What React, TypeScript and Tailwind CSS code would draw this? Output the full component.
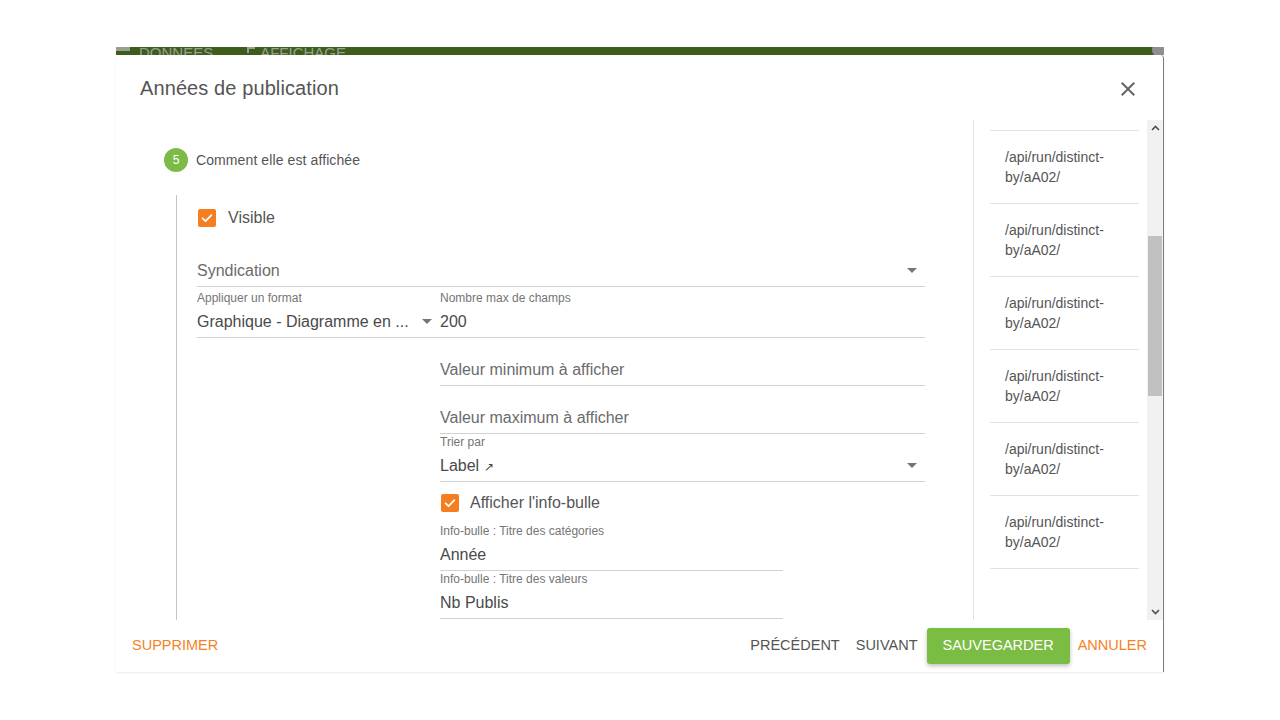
import React from "react";

const ORANGE = "#f6821f";
const GREEN = "#7bbc43";

function Check({ className = "" }: { className?: string }) {
  return (
    <span
      className={`flex h-[18px] w-[18px] items-center justify-center rounded-[2px] bg-[#f57f20] ${className}`}
    >
      <svg width="14" height="14" viewBox="0 0 24 24">
        <path
          d="M4.5 12.5l5 5 10-10.5"
          fill="none"
          stroke="#fff"
          strokeWidth="3"
          strokeLinecap="round"
          strokeLinejoin="round"
        />
      </svg>
    </span>
  );
}

function Caret() {
  return (
    <svg width="10" height="5" viewBox="0 0 10 5" className="shrink-0">
      <polygon points="0,0 10,0 5,5" fill="#757575" />
    </svg>
  );
}

function Field({
  label,
  value,
  placeholder,
  select,
  className = "",
}: {
  label?: string;
  value?: React.ReactNode;
  placeholder?: string;
  select?: boolean;
  className?: string;
}) {
  return (
    <div className={`flex h-[48px] flex-col justify-end border-b border-[#d2d2d2] ${className}`}>
      {label && (
        <div className="h-[16px] text-[12px] leading-[16px] text-[#757575]">{label}</div>
      )}
      <div className="flex h-[31px] items-center pr-[8px] text-[16px]">
        <span
          className={`flex-1 truncate ${value ? "text-[#4a4a4a]" : "text-[#6b6b6b]"}`}
        >
          {value ?? placeholder}
        </span>
        {select && <Caret />}
      </div>
    </div>
  );
}

function ApiItem() {
  return (
    <div className="border-b border-[#e3e3e3] py-[16px] pl-[15px] text-[14px] leading-[20px] text-[#555]">
      /api/run/distinct-
      <br />
      by/aA02/
    </div>
  );
}

export default function App() {
  return (
    <div className="min-h-screen bg-white pt-[47px] font-['Liberation_Sans',Arial,sans-serif]">
      {/* page behind the dialog */}
      <div className="relative ml-[116px] h-[8px] w-[1048px] overflow-hidden bg-[#3d5d1c]">
        <div className="-mt-[2px] flex items-start text-[15px] uppercase leading-[15px] text-[#9aa08f]">
          <span className="mt-[2px] h-[4px] w-[14px] bg-[#9aa08f]" />
          <span className="ml-[9px]">Données</span>
          <span className="ml-[34px] mt-[2px] h-[6px] w-[8px] border-l-2 border-t-2 border-[#9aa08f]" />
          <span className="ml-[5px]">Affichage</span>
        </div>
        <span className="absolute -top-[4px] right-[-2px] h-[14px] w-[14px] rounded-full bg-[#8f8f8f]" />
      </div>

      <div className="ml-[116px] flex h-[617px] w-[1048px] flex-col rounded-tr-[4px] border-r border-[#7c7c7c] bg-white shadow-[0_1px_2px_rgba(0,0,0,0.08)]">
        {/* header */}
        <div className="flex h-[65px] shrink-0 items-center justify-between pl-[24px] pr-[23px]">
          <h2 className="pt-[1px] text-[20px] tracking-[0.1px] text-[#555]">Années de publication</h2>
          <svg width="24" height="24" viewBox="0 0 24 24" className="mt-[3px]">
            <path
              d="M19 6.41L17.59 5 12 10.59 6.41 5 5 6.41 10.59 12 5 17.59 6.41 19 12 13.41 17.59 19 19 17.59 13.41 12z"
              fill="#666"
            />
          </svg>
        </div>

        {/* body */}
        <div className="flex h-[500px] shrink-0 overflow-hidden">
          <div className="w-[857px] shrink-0 pt-[28px]">
            <div className="flex h-[24px] items-center pl-[48px]">
              <span className="flex h-[24px] w-[24px] items-center justify-center rounded-full bg-[#7cbb45] text-[12px] text-white">
                5
              </span>
              <span className="ml-[8px] text-[14px] tracking-[0.1px] text-[#555]">
                Comment elle est affichée
              </span>
            </div>

            <div className="ml-[60px] mt-[23px] h-[500px] border-l border-[#c4c4c4] pl-[20px] pt-[1px]">
              <div className="flex h-[43px] w-[728px] items-center">
                <Check className="ml-[1px]" />
                <span className="ml-[12px] text-[16px] text-[#555]">Visible</span>
              </div>

              <Field className="w-[728px]" placeholder="Syndication" select />

              <div className="mt-[3px] flex w-[728px]">
                <Field
                  className="w-[243px]"
                  label="Appliquer un format"
                  value="Graphique - Diagramme en ..."
                  select
                />
                <Field className="w-[485px]" label="Nombre max de champs" value="200" />
              </div>

              <div className="ml-[243px] w-[485px]">
                <Field placeholder="Valeur minimum à afficher" />
                <Field placeholder="Valeur maximum à afficher" />
                <Field
                  label="Trier par"
                  value={
                    <>
                      Label <span className="text-[12px]">↗</span>
                    </>
                  }
                  select
                />
                <div className="flex h-[41px] items-center">
                  <Check className="ml-[1px]" />
                  <span className="ml-[11px] text-[16px] text-[#555]">Afficher l'info-bulle</span>
                </div>
                <Field
                  className="w-[343px]"
                  label="Info-bulle : Titre des catégories"
                  value="Année"
                />
                <Field
                  className="w-[343px]"
                  label="Info-bulle : Titre des valeurs"
                  value="Nb Publis"
                />
              </div>
            </div>
          </div>

          {/* right panel */}
          <div className="w-[174px] shrink-0 border-l border-[#e0e0e0] pl-[16px] pr-[8px] pt-[10px]">
            <div className="border-t border-[#e3e3e3]">
              {Array.from({ length: 6 }).map((_, i) => (
                <ApiItem key={i} />
              ))}
            </div>
          </div>

          {/* scrollbar */}
          <div className="flex w-[16px] shrink-0 flex-col bg-[#f1f1f1]">
            <div className="flex h-[16px] items-center justify-center">
              <svg width="9" height="6" viewBox="0 0 9 6">
                <path d="M1 5l3.5-3.5L8 5" fill="none" stroke="#505050" strokeWidth="1.6" />
              </svg>
            </div>
            <div className="mx-[1px] mt-[100px] h-[160px] bg-[#c1c1c1]" />
            <div className="flex-1" />
            <div className="flex h-[16px] items-center justify-center">
              <svg width="9" height="6" viewBox="0 0 9 6">
                <path d="M1 1l3.5 3.5L8 1" fill="none" stroke="#505050" strokeWidth="1.6" />
              </svg>
            </div>
          </div>
        </div>

        {/* footer */}
        <div className="flex h-[52px] shrink-0 items-center justify-between pl-[8px] pr-[8px] text-[14.5px]">
          <button className="h-[36px] px-[8px] uppercase" style={{ color: ORANGE }}>
            Supprimer
          </button>
          <div className="flex items-center">
            <button className="h-[36px] px-[8px] uppercase text-[#555]">Précédent</button>
            <button className="h-[36px] px-[8px] uppercase text-[#555]">Suivant</button>
            <button
              className="ml-[1px] h-[36px] rounded-[3px] px-[16px] uppercase text-white shadow-[0_2px_4px_rgba(0,0,0,0.25)]"
              style={{ backgroundColor: GREEN }}
            >
              Sauvegarder
            </button>
            <button className="h-[36px] px-[8px] uppercase" style={{ color: ORANGE }}>
              Annuler
            </button>
          </div>
        </div>
      </div>
    </div>
  );
}
